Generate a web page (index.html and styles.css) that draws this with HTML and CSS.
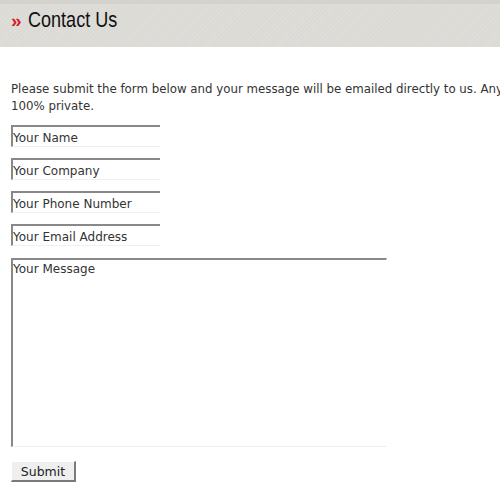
FILE: index.html
```html
<!DOCTYPE html>
<html>
<head>
<meta charset="utf-8">
<link rel="stylesheet" href="styles.css">
</head>
<body>
<div class="header">
  <h1 class="title"><span class="arrows">»</span> <span class="title-text">Contact Us</span></h1>
</div>
<div class="content">
  <p class="intro">Please submit the form below and your message will be emailed directly to us. Any information is kept 100% private.</p>
  <form class="form">
    <input class="field" type="text" value="Your Name">
    <input class="field" type="text" value="Your Company">
    <input class="field" type="text" value="Your Phone Number">
    <input class="field" type="text" value="Your Email Address">
    <textarea class="message">Your Message</textarea>
    <button class="submit" type="button">Submit</button>
  </form>
</div>
</body>
</html>
```
FILE: styles.css
```css
html, body {
  margin: 0;
  padding: 0;
  overflow: hidden;
  background: #fff;
}
body {
  font-family: "DejaVu Sans", Verdana, sans-serif;
  font-size: 11.8px;
  color: #333;
  width: 500px;
}
.header {
  height: 47px;
  box-sizing: border-box;
  border-top: 4px solid #d4d2cd;
  background-color: #dcdad5;
  background-image: repeating-linear-gradient(-45deg, rgba(255,255,255,0.12) 0 1px, rgba(0,0,0,0) 1px 3px);
  padding-left: 11px;
}
.title {
  margin: 0;
  padding-top: 3px;
  font-family: "Liberation Sans", sans-serif;
  font-weight: normal;
  font-size: 22px;
  color: #111;
  line-height: 26px;
  white-space: nowrap;
}
.title-text {
  display: inline-block;
  transform: scaleX(0.82);
  transform-origin: left center;
}
.arrows {
  color: #d0202a;
  font-weight: bold;
  font-size: 19px;
}
.content {
  padding-left: 11px;
}
.intro {
  width: 640px;
  margin: 34px 0 0;
  line-height: 17px;
}
.form {
  display: flex;
  flex-direction: column;
  align-items: flex-start;
  gap: 11px;
  margin-top: 10px;
}
.field, .message {
  font-family: "DejaVu Sans", Verdana, sans-serif;
  font-size: 12px;
  color: #333;
  background: #fff;
  border-style: solid;
  border-width: 2px 0 1px 2px;
  border-color: #888 #fff #f0f0f0 #888;
  padding: 2px 0 0 0;
  margin: 0;
  outline: none;
}
.field {
  width: 149px;
  height: 22px;
  box-sizing: border-box;
}
.message {
  width: 376px;
  height: 189px;
  box-sizing: border-box;
  resize: none;
  border-right: 1px solid #fff;
  margin-top: 1px;
}
.submit {
  margin-top: 3px;
  width: 65px;
  height: 21px;
  box-sizing: border-box;
  font-family: "DejaVu Sans", Verdana, sans-serif;
  font-size: 12.5px;
  color: #222;
  background: #efefef;
  border-style: solid;
  border-width: 1px 2px 2px 1px;
  border-color: #fff #7a7a7a #7a7a7a #fff;
  padding: 0;
}
```
